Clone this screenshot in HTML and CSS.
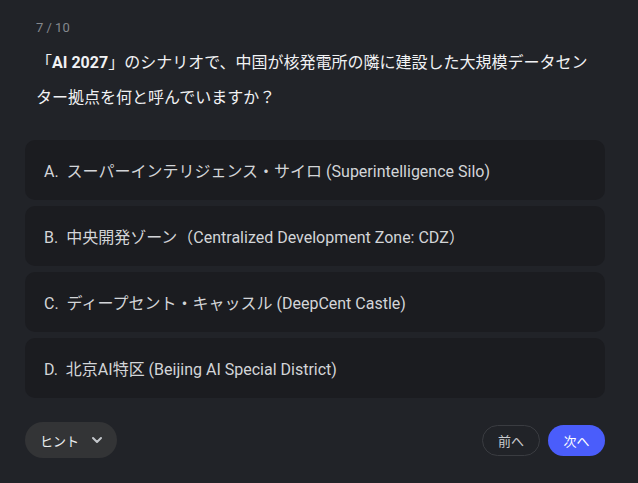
FILE: index.html
```html
<!DOCTYPE html>
<html lang="ja">
<head>
<meta charset="utf-8">
<link rel="stylesheet" href="styles.css">
</head>
<body>
<div class="quiz">
  <div class="counter">7 / 10</div>
  <div class="question">「<b>AI 2027</b>」のシナリオで、中国が核発電所の隣に建設した大規模データセンター拠点を何と呼んでいますか？</div>
  <div class="options">
    <div class="option">A.&nbsp; スーパーインテリジェンス・サイロ (Superintelligence Silo)</div>
    <div class="option">B.&nbsp; 中央開発ゾーン（Centralized Development Zone: CDZ）</div>
    <div class="option">C.&nbsp; ディープセント・キャッスル (DeepCent Castle)</div>
    <div class="option">D.&nbsp; 北京AI特区 (Beijing AI Special District)</div>
  </div>
  <div class="footer">
    <button class="hint">ヒント
      <svg width="12" height="12" viewBox="0 0 12 12"><path d="M2 4l4 4 4-4" fill="none" stroke="#c4c7cc" stroke-width="2" stroke-linecap="round" stroke-linejoin="round"/></svg>
    </button>
    <div class="nav">
      <button class="prev">前へ</button>
      <button class="next">次へ</button>
    </div>
  </div>
</div>
</body>
</html>
```

FILE: styles.css
```css
html, body {
  margin: 0;
  padding: 0;
  background: #212328;
}
body {
  font-family: Roboto, "Noto Sans CJK JP", sans-serif;
  color: #e8e9eb;
}
.quiz {
  padding: 18px 33px 0 25px;
}
.counter {
  padding-left: 11px;
  font-size: 13px;
  color: #85888d;
  line-height: 20px;
}
.question {
  padding: 7px 8px 0 11px;
  font-size: 16px;
  line-height: 35px;
  color: #f1f2f4;
}
.question b {
  font-weight: 700;
}
.options {
  margin-top: 25px;
  display: flex;
  flex-direction: column;
  gap: 6px;
}
.option {
  height: 60px;
  box-sizing: border-box;
  display: flex;
  align-items: center;
  padding-left: 19px;
  background: #1b1c20;
  border-radius: 10px;
  font-size: 16px;
  color: #d3d5d8;
}
.footer {
  margin-top: 24px;
  display: flex;
  justify-content: space-between;
  align-items: center;
}
button {
  font-family: Roboto, "Noto Sans CJK JP", sans-serif;
  cursor: pointer;
}
.hint {
  height: 36px;
  width: 92px;
  border: none;
  border-radius: 18px;
  background: #333436;
  color: #eceef0;
  font-size: 13px;
  display: flex;
  align-items: center;
  gap: 12px;
  padding: 0 0 0 15px;
}
.nav {
  display: flex;
  gap: 8px;
}
.prev, .next {
  height: 31px;
  width: 58px;
  border-radius: 16px;
  font-size: 13px;
  padding: 0;
}
.prev {
  background: transparent;
  border: 1px solid #3a3c41;
  color: #c9cbcf;
}
.next {
  width: 57px;
  background: #4a5dfb;
  border: none;
  color: #ffffff;
}
```
